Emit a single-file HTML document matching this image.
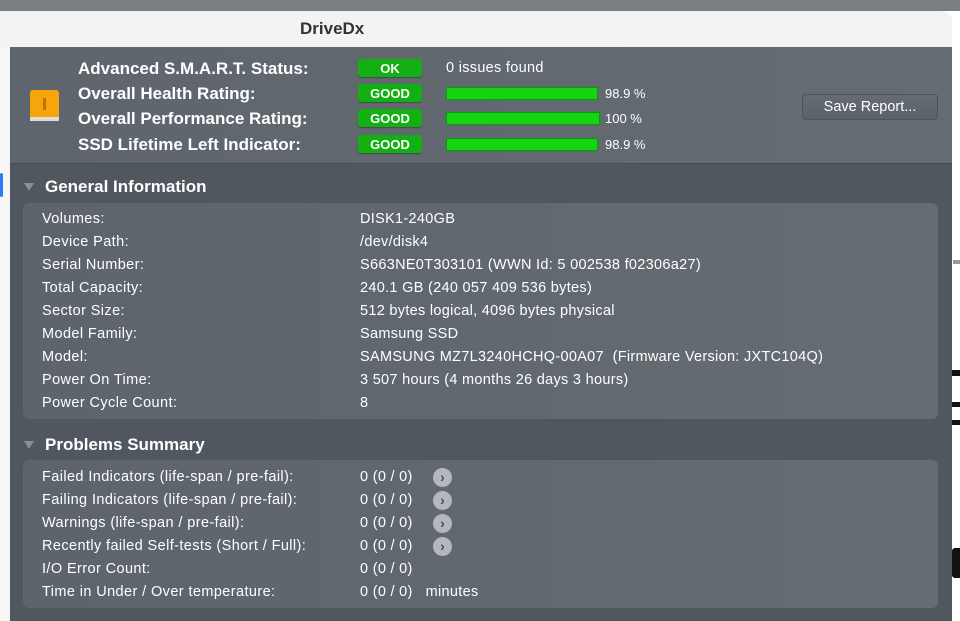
<!DOCTYPE html>
<html><head><meta charset="utf-8"><style>
*{margin:0;padding:0;box-sizing:border-box}
body{width:960px;height:621px;overflow:hidden;background:#fff;font-family:"Liberation Sans",sans-serif;position:relative}
.top{position:absolute;left:0;top:0;width:960px;height:11px;background:#7a7e83}
.title{position:absolute;left:0;top:11px;width:952px;height:36px;background:#f3f3f3;border-top-right-radius:10px;font-weight:bold;font-size:17px;line-height:36px;color:#333}
.title span{position:absolute;left:300px}
.lside{position:absolute;left:0;top:47px;width:10px;height:574px;background:#f6f6f6}
.blue{position:absolute;left:0;top:173px;width:3px;height:24px;background:#2c7cf6;border-radius:2px}
.rside{position:absolute;left:952px;top:47px;width:8px;height:574px;background:#fff}
.win{position:absolute;left:10px;top:47px;width:942px;height:574px;background:#50575e}
.hdr{position:absolute;left:0;top:0;width:942px;height:117px;background:linear-gradient(90deg,#5e656c,#656c73);border-bottom:1px solid #474d53}
.lab{position:absolute;left:68px;color:#fff;font-weight:bold;font-size:17px}
.badge{position:absolute;left:348px;width:64px;height:18px;background:#12b012;border-radius:3px;color:#fff;font-weight:bold;font-size:13px;text-align:center;line-height:19px;box-shadow:0 1px 1px rgba(0,0,0,.3)}
.bar{position:absolute;left:436px;width:152px;height:13px;background:#14d414;border:1px solid #0a9a0a}
.pct{position:absolute;left:595px;color:#fff;font-size:13px}
.btn{position:absolute;left:792px;top:47px;width:136px;height:26px;border-radius:4px;background:linear-gradient(#656c73,#5a6168);border:1px solid #4d5359;color:#fff;font-size:14.5px;text-align:center;line-height:24px}
.sec{position:absolute;left:35px;color:#fff;font-weight:bold;font-size:17px}
.tri{position:absolute;left:14px;width:0;height:0;border-left:5px solid transparent;border-right:5px solid transparent;border-top:8px solid #8a9097}
.box{position:absolute;left:13px;width:915px;background:linear-gradient(90deg,#5d646b,#656c73);border-radius:6px}
.r{position:absolute;left:32px;color:#fff;font-size:14.5px;white-space:nowrap;letter-spacing:0.4px}
.v{position:absolute;left:350px;color:#fff;font-size:14.5px;white-space:nowrap;letter-spacing:0.3px}
.arr{position:absolute;left:423px;width:19px;height:19px;border-radius:50%;background:#b4b8bc;color:#4a5057;font-size:14px;font-weight:bold;text-align:center;line-height:18px}
</style></head><body>
<div class="top"></div>
<div class="title"><span>DriveDx</span></div>
<div class="lside"></div><div class="blue"></div>
<div class="rside"></div>
<div style="position:absolute;left:953px;top:260px;width:7px;height:4px;background:#999"></div>
<div style="position:absolute;left:952px;top:370px;width:8px;height:6px;background:#111"></div>
<div style="position:absolute;left:952px;top:402px;width:8px;height:5px;background:#111"></div>
<div style="position:absolute;left:952px;top:420px;width:8px;height:5px;background:#111"></div>
<div style="position:absolute;left:952px;top:548px;width:8px;height:30px;background:#111;border-radius:3px 0 0 3px"></div>
<div class="win">
 <div class="hdr">
  <svg style="position:absolute;left:19px;top:41px" width="32" height="36"><rect x="1" y="2" width="29" height="30" rx="3" fill="#f6a50c"/><rect x="1" y="29" width="29" height="4" fill="#ddd"/><rect x="14" y="10" width="3" height="12" fill="#c27000"/></svg>
  <div class="lab" style="top:12px">Advanced S.M.A.R.T. Status:</div>
  <div class="lab" style="top:37px">Overall Health Rating:</div>
  <div class="lab" style="top:62px">Overall Performance Rating:</div>
  <div class="lab" style="top:88px">SSD Lifetime Left Indicator:</div>
  <div class="badge" style="top:12px">OK</div>
  <div class="badge" style="top:37px">GOOD</div>
  <div class="badge" style="top:62px">GOOD</div>
  <div class="badge" style="top:88px">GOOD</div>
  <div style="position:absolute;left:436px;top:13px;color:#fff;font-size:14.5px;letter-spacing:0.3px">0 issues found</div>
  <div class="bar" style="top:40px"></div><div class="pct" style="top:39px">98.9 %</div>
  <div class="bar" style="top:65px;width:154px"></div><div class="pct" style="top:64px">100 %</div>
  <div class="bar" style="top:91px"></div><div class="pct" style="top:90px">98.9 %</div>
  <div class="btn">Save Report...</div>
 </div>
 <div class="tri" style="top:136px"></div>
 <div class="sec" style="top:130px">General Information</div>
 <div class="box" style="top:156px;height:216px"></div>
 <div class="r" style="top:164px">Volumes:</div><div class="v" style="top:164px">DISK1-240GB</div>
 <div class="r" style="top:187px">Device Path:</div><div class="v" style="top:187px">/dev/disk4</div>
 <div class="r" style="top:210px">Serial Number:</div><div class="v" style="top:210px">S663NE0T303101 (WWN Id: 5 002538 f02306a27)</div>
 <div class="r" style="top:233px">Total Capacity:</div><div class="v" style="top:233px">240.1 GB (240 057 409 536 bytes)</div>
 <div class="r" style="top:256px">Sector Size:</div><div class="v" style="top:256px">512 bytes logical, 4096 bytes physical</div>
 <div class="r" style="top:279px">Model Family:</div><div class="v" style="top:279px">Samsung SSD</div>
 <div class="r" style="top:302px">Model:</div><div class="v" style="top:302px">SAMSUNG MZ7L3240HCHQ-00A07&nbsp; (Firmware Version: JXTC104Q)</div>
 <div class="r" style="top:325px">Power On Time:</div><div class="v" style="top:325px">3 507 hours (4 months 26 days 3 hours)</div>
 <div class="r" style="top:348px">Power Cycle Count:</div><div class="v" style="top:348px">8</div>
 <div class="tri" style="top:394px"></div>
 <div class="sec" style="top:388px">Problems Summary</div>
 <div class="box" style="top:413px;height:148px"></div>
 <div class="r" style="top:422px">Failed Indicators (life-span / pre-fail):</div><div class="v" style="top:422px">0 (0 / 0)</div><div class="arr" style="top:421px">&#x203A;</div>
 <div class="r" style="top:445px">Failing Indicators (life-span / pre-fail):</div><div class="v" style="top:445px">0 (0 / 0)</div><div class="arr" style="top:444px">&#x203A;</div>
 <div class="r" style="top:468px">Warnings (life-span / pre-fail):</div><div class="v" style="top:468px">0 (0 / 0)</div><div class="arr" style="top:467px">&#x203A;</div>
 <div class="r" style="top:491px">Recently failed Self-tests (Short / Full):</div><div class="v" style="top:491px">0 (0 / 0)</div><div class="arr" style="top:490px">&#x203A;</div>
 <div class="r" style="top:514px">I/O Error Count:</div><div class="v" style="top:514px">0 (0 / 0)</div>
 <div class="r" style="top:537px">Time in Under / Over temperature:</div><div class="v" style="top:537px">0 (0 / 0)&nbsp;&nbsp; minutes</div>
</div>
</body></html>
